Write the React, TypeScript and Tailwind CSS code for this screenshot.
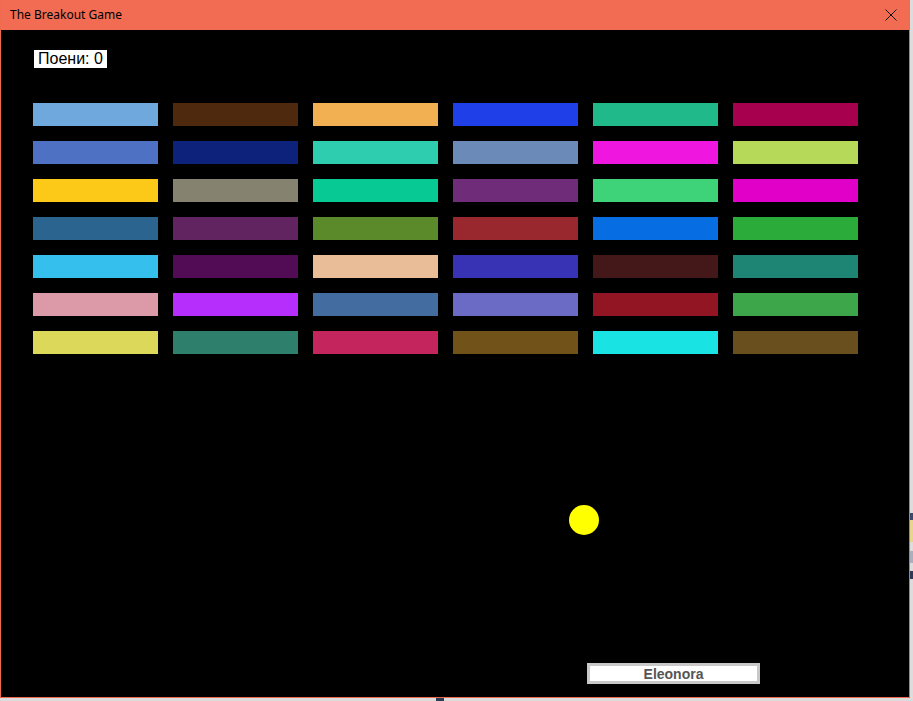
const bricks = [
  ['#6fa8dc', '#4f290d', '#f3b052', '#1f40e8', '#1fb98a', '#a7004f'],
  ['#4f71c3', '#0d237b', '#2fcdb0', '#6c8ab7', '#ef17e0', '#b7d95a'],
  ['#fdc918', '#868270', '#07c994', '#6f2c78', '#3ed279', '#e000c8'],
  ['#2c6490', '#612460', '#5b8a2b', '#98282d', '#066de3', '#2aab3a'],
  ['#35bfec', '#520c55', '#e8bd98', '#3832b4', '#441818', '#1e8574'],
  ['#dc99a8', '#b62efc', '#436ca0', '#6b6bc6', '#911523', '#3ea64a'],
  ['#dcd95a', '#2e7f6b', '#c4255c', '#715218', '#1ae3e3', '#6a4f1e'],
];

function TitleBar() {
  return (
    <div className="h-[30px] shrink-0 bg-[#f16c53] flex items-center justify-between pl-[9px] pr-[12px]">
      <span className="text-[12px] text-black font-['Noto_Sans',sans-serif]">The Breakout Game</span>
      <svg width="12" height="12" viewBox="0 0 12 12">
        <path d="M0.5 0.5 L11.5 11.5 M11.5 0.5 L0.5 11.5" stroke="#111" strokeWidth="1" />
      </svg>
    </div>
  );
}

function Board() {
  return (
    <div className="relative flex-1 bg-black font-['Liberation_Sans',Arial,sans-serif] flex flex-col items-start pt-[20px] pl-[32px]">
      <div className="ml-[1px] bg-white text-black text-[16px] leading-[18px] px-[4px]">Поени: 0</div>
      <div className="mt-[35px] grid grid-cols-[repeat(6,125px)] gap-[15px]">
        {bricks.flat().map((c, i) => (
          <div key={i} className="h-[23px]" style={{ backgroundColor: c }} />
        ))}
      </div>
      {/* ball */}
      <div className="absolute left-[568px] top-[475px] w-[30px] h-[30px] rounded-full bg-[#ffff00]" />
      {/* paddle */}
      <div className="absolute left-[586px] top-[633px] w-[173px] h-[21px] bg-white border-[3px] border-[#c8c8c8] flex items-center justify-center">
        <span className="text-[14px] font-bold text-[#555] leading-none">Eleonora</span>
      </div>
    </div>
  );
}

export default function App() {
  return (
    <div className="w-[913px] h-[701px] bg-[#dcdcdc] relative overflow-hidden">
      {/* desktop peeking out behind the window */}
      <div className="absolute left-[910px] top-[513px] w-[3px] flex flex-col">
        <div className="h-[7px] bg-[#3b4a6b]" />
        <div className="h-[22px] bg-[#e6d58a]" />
        <div className="h-[9px]" />
        <div className="h-[12px] bg-[#a9b0bd]" />
        <div className="h-[8px]" />
        <div className="h-[8px] bg-[#2d3a5a]" />
      </div>
      <div className="absolute left-[436px] top-[698px] w-[8px] h-[3px] bg-[#2b3a55]" />
      <div className="w-[910px] h-[698px] border border-[#f06a50] border-t-0 flex flex-col">
        <TitleBar />
        <Board />
      </div>
    </div>
  );
}
